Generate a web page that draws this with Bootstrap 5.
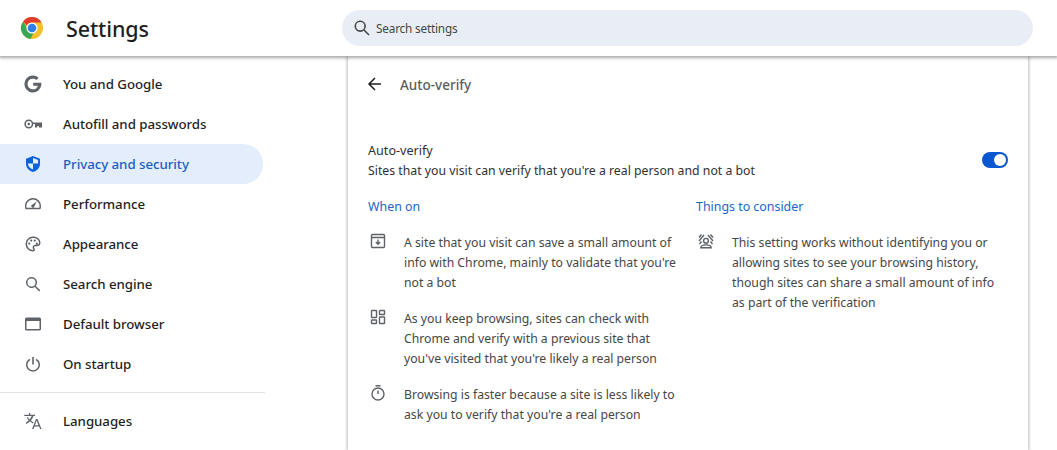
<!DOCTYPE html>
<html lang="en"><head><meta charset="utf-8"><title>Settings</title>
<link href="https://cdn.jsdelivr.net/npm/bootstrap@5.3.0/dist/css/bootstrap.min.css" rel="stylesheet">
<style>
html,body{height:450px;overflow:hidden}
body{font-family:"Noto Sans","Open Sans",sans-serif;font-size:13px;color:#1f1f1f;background:#fff}
.topbar{height:56px;position:relative;z-index:2;background:#fff;box-shadow:0 1px 3px 1px rgba(60,64,67,.45)}
.logo-box{width:66px;padding-left:20px}
.app-title{font-size:21.5px;font-weight:500;width:276px;letter-spacing:-.1px;color:#1f1f1f;padding-top:2px}
.search-box{width:691px;height:36px;border-radius:18px;background:#e9eef6;padding-left:10px;gap:4px;font-size:11.8px;letter-spacing:-.2px;color:#444746}
.search-box span{padding-top:2px}
.side{width:265px;flex:none;padding-top:8px}
.side-link{height:40px;padding-left:23px;padding-top:2px;gap:20px;font-weight:500;font-size:13.3px;letter-spacing:-.05px;color:#1f1f1f;text-decoration:none;width:263px;border-radius:0 20px 20px 0}
.side-link svg{width:20px;height:20px;flex:none;fill:#5f6368;margin-top:-2px}
.side-link.on{background:#e4edfb;color:#1a5fc4}
.side-link.on svg{fill:#0b63dc}
.side-rule{height:1px;background:#e3e3e3;margin:8px 0}
.panel{width:680px;height:394px;margin-left:83px;box-shadow:0 0 3px 1px rgba(60,64,67,.35);background:#fff;padding:0 20px}
.sub-head{height:56px;padding-top:2px;gap:17px;margin-left:-1px;font-weight:500;font-size:13.5px;color:#5b5e61}
.sub-head svg{width:16px;height:16px;margin-top:-2px}
.opt-row{margin-top:29px;line-height:20px;font-size:12.27px;color:#303134}
.opt-name{font-size:12.6px}
.tog{width:26px;height:16px;border-radius:8px;background:#0b57d0;position:relative;margin-top:-2px}
.tog i{position:absolute;right:2px;top:2px;width:12px;height:12px;border-radius:50%;background:#fff}
.cols{margin-top:16px;gap:8px}
.col-a{width:320px}.col-b{width:312px}
.col-head{color:#1a66c9;font-size:12.4px;line-height:20px;margin-bottom:16px}
.pt{gap:18px;line-height:20px;font-size:12.23px;color:#444746;margin-bottom:16px;padding-left:2px}
.pt svg{width:16px;height:16px;flex:none;fill:none;stroke:#5f6368;stroke-width:1.4}
</style></head>
<body>
<header class="topbar d-flex align-items-center">
  <div class="logo-box d-flex">
    <svg width="24" height="24" viewBox="0 0 24 24"><circle cx="12" cy="12" r="11" fill="#f5c02e"/><path d="M12 1a11 11 0 0 1 9.530 5.500H12a5.500 5.500 0 0 0-5 3.200L3.200 5.400A11 11 0 0 1 12 1z" fill="#e33b2e"/><path d="M3.200 5.400 8 13.800a5 5 0 0 0 5.400 3.100L10.600 23A11 11 0 0 1 3.200 5.400z" fill="#3aa757"/><circle cx="12" cy="12" r="5.600" fill="#fff"/><circle cx="12" cy="12" r="4.300" fill="#2f7fe6"/></svg>
  </div>
  <div class="app-title">Settings</div>
  <div class="search-box d-flex align-items-center">
    <svg width="20" height="20" viewBox="0 0 20 20" fill="none" stroke="#444746" stroke-width="1.600"><circle cx="8.200" cy="8.200" r="4.900"/><path d="m12 12 5 5"/></svg>
    <span>Search settings</span>
  </div>
</header>
<div class="d-flex">
  <nav class="side">
    <a class="side-link d-flex align-items-center" href="#"><svg viewBox="0 0 20 20"><path d="M10 1.500a8.500 8.500 0 1 0 8.300 9.700V8.700H10.200v3h4.700A5.300 5.300 0 1 1 10 4.700c1.300 0 2.500.5 3.400 1.300l2.300-2.300A8.500 8.500 0 0 0 10 1.500z"/></svg>You and Google</a>
    <a class="side-link d-flex align-items-center" href="#"><svg viewBox="0 0 20 20"><circle cx="5.800" cy="10" r="3.700" fill="none" stroke="#5f6368" stroke-width="1.500"/><circle cx="5.800" cy="10" r="1.300"/><path d="M9.500 8.500h9.500v5h-3.200v-1.500h-1.600v1.500h-2.200V10H9.500z"/></svg>Autofill and passwords</a>
    <a class="side-link on d-flex align-items-center" href="#"><svg viewBox="0 0 20 20"><path fill-rule="evenodd" d="M10 2 17 4.700v5c0 3.900-2.900 7.100-7 8.300-4.100-1.200-7-4.400-7-8.300v-5zm0 1.900v5.700H4.900c.2 2.800 2.300 5 5.100 6V9.600h5.100V5.900z"/></svg>Privacy and security</a>
    <a class="side-link d-flex align-items-center" href="#"><svg viewBox="0 0 20 20"><path fill-rule="evenodd" d="M10 4a8 8 0 0 1 8 8c0 1.200-.2 2.200-.6 3.200H2.600A8 8 0 0 1 10 4zm0 1.500A6.500 6.500 0 0 0 3.600 13.700h12.800c.1-.5.1-1.100.1-1.700a6.500 6.500 0 0 0-6.500-6.500zm3.600 1.900-2.400 5.300a1.500 1.500 0 1 1-2-2z"/></svg>Performance</a>
    <a class="side-link d-flex align-items-center" href="#"><svg viewBox="0 0 20 20"><path fill-rule="evenodd" d="M10 2.500a7.500 7.500 0 0 0 0 15c1.200 0 1.900-.8 1.900-1.700 0-1.100-.8-1.300-.8-2.200 0-.8.600-1.300 1.400-1.300h1.700c2 0 3.300-1.500 3.300-3.500 0-3.600-3.400-6.300-7.500-6.300zM10 4c3.300 0 6 2 6 4.800 0 1.200-.7 2-1.800 2h-1.700c-1.700 0-2.900 1.200-2.900 2.800 0 1 .6 1.500.8 2.200-.1.100-.2.200-.4.200A6 6 0 0 1 10 4zM6.200 8.500a1.100 1.100 0 1 0 0 2.200 1.100 1.100 0 0 0 0-2.200zm2-3a1.100 1.100 0 1 0 0 2.200 1.100 1.100 0 0 0 0-2.200zm3.600 0a1.100 1.100 0 1 0 0 2.200 1.100 1.100 0 0 0 0-2.200zm2 3a1.100 1.100 0 1 0 0 2.200 1.100 1.100 0 0 0 0-2.200z"/></svg>Appearance</a>
    <a class="side-link d-flex align-items-center" href="#"><svg viewBox="0 0 20 20"><path fill-rule="evenodd" d="M8.500 3a5.500 5.500 0 0 1 4.300 8.900l4.500 4.400-1.100 1.100-4.400-4.500A5.500 5.500 0 1 1 8.500 3zm0 1.500a4 4 0 1 0 0 8 4 4 0 0 0 0-8z"/></svg>Search engine</a>
    <a class="side-link d-flex align-items-center" href="#"><svg viewBox="0 0 20 20"><path fill-rule="evenodd" d="M3.500 3.500h13A1.500 1.500 0 0 1 18 5v10a1.500 1.500 0 0 1-1.500 1.500h-13A1.500 1.500 0 0 1 2 15V5a1.500 1.500 0 0 1 1.500-1.500zm0 3.500v8h13V7z"/></svg>Default browser</a>
    <a class="side-link d-flex align-items-center" href="#"><svg viewBox="0 0 20 20"><path d="M9.200 3h1.600v7.500H9.200zM6.400 4.800l1 1.200A5.500 5.500 0 1 0 12.600 6l1-1.200a7 7 0 1 1-7.200 0z"/></svg>On startup</a>
    <div class="side-rule"></div>
    <a class="side-link d-flex align-items-center" href="#"><svg viewBox="0 0 20 20"><path fill-rule="evenodd" d="M6 2h1.200v1.800H12V5h-1.500c-.6 1.800-1.500 3.300-2.600 4.500.8.800 1.700 1.500 2.600 2l-.5 1.100c-1.100-.6-2.100-1.400-3-2.300-1 1-2.200 1.900-3.700 2.600l-.5-1.100C3.600 11 4.700 10.300 5.600 9.400 4.800 8.400 4.200 7.400 3.700 6.300h1.300c.4.800.9 1.600 1.500 2.300.8-1 1.500-2.200 2.200-3.600H1.300V3.800H6zm7 6h1.500l4 10h-1.400l-1-2.600h-4.600l-1 2.600H9zm.7 1.600-1.800 4.600h3.600z"/></svg>Languages</a>
  </nav>
  <main>
    <div class="panel">
      <div class="sub-head d-flex align-items-center">
        <svg viewBox="0 0 16 16" fill="none" stroke="#1f1f1f" stroke-width="1.500"><path d="M14 8H2.500M8 2 2 8l6 6"/></svg>
        <span>Auto-verify</span>
      </div>
      <div class="opt-row d-flex justify-content-between align-items-center">
        <div><div class="opt-name">Auto-verify</div><div>Sites that you visit can verify that you're a real person and not a bot</div></div>
        <div class="tog"><i></i></div>
      </div>
      <div class="cols d-flex">
        <section class="col-a">
          <div class="col-head">When on</div>
          <div class="pt d-flex"><svg viewBox="0 0 16 16"><path d="M2.500 1.500h11a1 1 0 0 1 1 1v11a1 1 0 0 1-1 1h-11a1 1 0 0 1-1-1v-11a1 1 0 0 1 1-1zM1.500 4.500h13"/><path d="M8 6.500v4.500M5.800 9 8 11.200 10.200 9"/></svg><div>A site that you visit can save a small amount of info with Chrome, mainly to validate that you're not a bot</div></div>
          <div class="pt d-flex"><svg viewBox="0 0 16 16"><rect x="1.500" y="1.500" width="5" height="7" rx=".6"/><rect x="9.500" y="1.500" width="5" height="4" rx=".6"/><rect x="1.500" y="11" width="5" height="3.500" rx=".6"/><rect x="9.500" y="8" width="5" height="6.500" rx=".6"/></svg><div>As you keep browsing, sites can check with Chrome and verify with a previous site that you've visited that you're likely a real person</div></div>
          <div class="pt d-flex"><svg viewBox="0 0 16 16"><circle cx="8" cy="9" r="6"/><path d="M5.500.8h5M8 5.500V9"/></svg><div>Browsing is faster because a site is less likely to ask you to verify that you're a real person</div></div>
        </section>
        <section class="col-b">
          <div class="col-head">Things to consider</div>
          <div class="pt d-flex"><svg viewBox="0 0 16 16"><circle cx="8" cy="7.800" r="2.400"/><path d="M2.800 14.700c0-2 1.800-2.800 5.200-2.800s5.200.8 5.200 2.800zM1 4.500 3.500 1.500M1 8 6 2M1.500 11 3.500 8.500M15 4.500 12.500 1.500M15 8 10 2M14.500 11 12.500 8.500"/></svg><div>This setting works without identifying you or allowing sites to see your browsing history, though sites can share a small amount of info as part of the verification</div></div>
        </section>
      </div>
    </div>
  </main>
</div>
<script src="https://cdn.jsdelivr.net/npm/bootstrap@5.3.0/dist/js/bootstrap.bundle.min.js"></script>
</body></html>
